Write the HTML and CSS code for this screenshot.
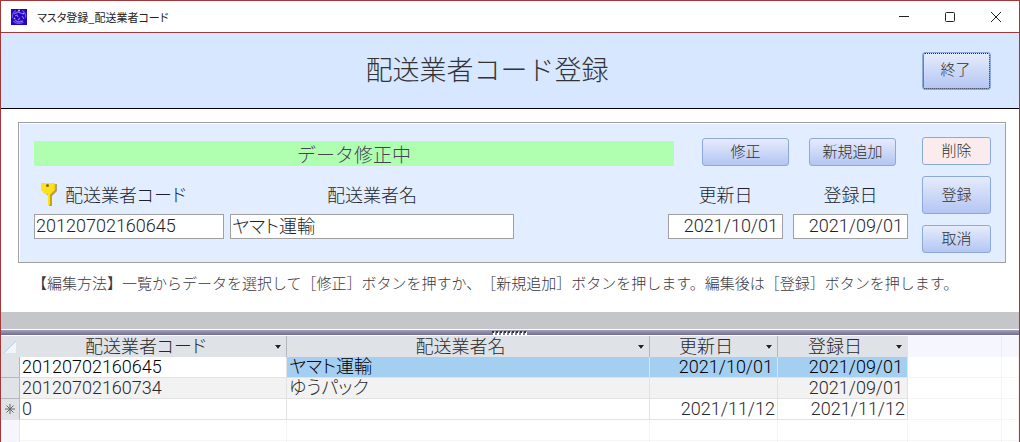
FILE: index.html
```
<!DOCTYPE html>
<html lang="ja">
<head>
<meta charset="utf-8">
<title>マスタ登録_配送業者コード</title>
<link rel="stylesheet" href="styles.css">
</head>
<body>
<div class="window">
  <header class="titlebar">
    <svg class="app-icon" viewBox="0 0 16 16" aria-hidden="true">
      <rect width="16" height="16" fill="#2a00c8"/>
      <g fill="none" stroke="#6458d4" stroke-width="1.3">
        <path d="M5 1.500C2 3 1 5 1.500 9M11 1.500c3 1.500 4 4 3.500 7M2.500 12c2 2.500 6 3.500 10 1"/>
        <path d="M3 5l4-2 5 2M4 11l3 2 5-1M11 7l2 3M4 7l2-1 1 2M9 9l-2 2" stroke="#7c72e2"/>
        <path d="M7 1.500h2M3 9l1 1M12 4l1 1" stroke="#b9b2f5"/>
      </g>
    </svg>
    <span class="caption">マスタ登録_配送業者コード</span>
    <div class="window-buttons">
      <button type="button" aria-label="最小化"><svg viewBox="0 0 12 12"><path d="M1 5.500h10"/></svg></button>
      <button type="button" aria-label="最大化"><svg viewBox="0 0 12 12"><rect x="1.500" y="1.500" width="9" height="9" rx="1"/></svg></button>
      <button type="button" aria-label="閉じる"><svg viewBox="0 0 12 12"><path d="M1 1l10 10M11 1L1 11"/></svg></button>
    </div>
  </header>

  <div class="form-header">
    <h1>配送業者コード登録</h1>
    <button type="button" class="btn btn-exit">終了</button>
  </div>

  <main class="form-body">
    <form class="panel">
      <div class="panel-main">
        <div class="status-row">
          <div class="status">データ修正中</div>
          <button type="button" class="btn btn-wide">修正</button>
          <button type="button" class="btn btn-wide">新規追加</button>
        </div>
        <div class="fields">
          <div class="field field-code">
            <label for="code">
              <svg class="key" viewBox="0 0 18 25" aria-hidden="true">
                <path d="M3 2h14v7l-5 5v10h-3V14L3 10z" fill="#a8a07a"/>
                <path d="M1 1h14v7l-4 4v11H8V12H5L1 8z" fill="#ffe01c"/>
                <path d="M10.500 12v11" stroke="#c8a400"/>
                <path d="M15 2v6l-4 4" fill="none" stroke="#d9b400"/>
                <circle cx="7.500" cy="3.500" r="1.500" fill="#716a35"/>
              </svg>配送業者コード</label>
            <input id="code" type="text" value="20120702160645">
          </div>
          <div class="field field-name">
            <label for="name">配送業者名</label>
            <input id="name" type="text" value="ヤマト運輸">
          </div>
          <div class="field field-date">
            <label for="updated">更新日</label>
            <input id="updated" type="text" value="2021/10/01">
          </div>
          <div class="field field-date">
            <label for="created">登録日</label>
            <input id="created" type="text" value="2021/09/01">
          </div>
        </div>
      </div>
      <div class="panel-side">
        <button type="button" class="btn btn-delete">削除</button>
        <button type="button" class="btn btn-save">登録</button>
        <button type="button" class="btn">取消</button>
      </div>
    </form>
    <p class="help">【編集方法】一覧からデータを選択して［修正］ボタンを押すか、［新規追加］ボタンを押します。編集後は［登録］ボタンを押します。</p>
  </main>

  <div class="spacer"></div>
  <div class="splitter"><svg class="grip" viewBox="0 0 36 4" aria-hidden="true"><path d="M1 2.500h35" stroke="#fff" stroke-width="3" stroke-dasharray="2 2"/><path d="M0 1h36" stroke="#33304a" stroke-width="2" stroke-dasharray="2 2"/></svg></div>

  <div class="sheet-area">
    <table class="sheet">
      <colgroup><col class="c-sel"><col class="c-code"><col class="c-name"><col class="c-upd"><col class="c-new"><col class="c-blank"><col></colgroup>
      <thead>
        <tr>
          <td class="corner"><svg viewBox="0 0 12 12" aria-hidden="true"><path d="M12 0v12H0z" fill="#eef5fb"/><path d="M12 0L0 12" stroke="#b4d0e8"/></svg></td>
          <th><div class="head"><span>配送業者コード</span><button type="button" aria-label="配送業者コードの並べ替え"></button></div></th>
          <th><div class="head"><span>配送業者名</span><button type="button" aria-label="配送業者名の並べ替え"></button></div></th>
          <th><div class="head"><span>更新日</span><button type="button" aria-label="更新日の並べ替え"></button></div></th>
          <th class="last"><div class="head"><span>登録日</span><button type="button" aria-label="登録日の並べ替え"></button></div></th>
          <td class="void"></td><td class="void"></td>
        </tr>
      </thead>
      <tbody>
        <tr class="selected"><td class="sel"></td><td class="current">20120702160645</td><td>ヤマト運輸</td><td class="date">2021/10/01</td><td class="date">2021/09/01</td><td class="void"></td><td class="void"></td></tr>
        <tr class="alt"><td class="sel"></td><td>20120702160734</td><td>ゆうパック</td><td class="date"></td><td class="date">2021/09/01</td><td class="void"></td><td class="void"></td></tr>
        <tr class="new"><td class="sel"><svg viewBox="0 0 10 10" aria-label="新規"><path d="M5 0v10M0 5h10M1.500 1.500l7 7M8.500 1.500l-7 7"/></svg></td><td>0</td><td></td><td class="date">2021/11/12</td><td class="date">2021/11/12</td><td class="void"></td><td class="void"></td></tr>
        <tr class="empty"><td class="sel"></td><td></td><td></td><td></td><td></td><td class="void"></td><td class="void"></td></tr>
        <tr class="empty"><td class="sel"></td><td></td><td></td><td></td><td></td><td class="void"></td><td class="void"></td></tr>
      </tbody>
    </table>
  </div>
</div>
</body>
</html>
```
FILE: styles.css
```
* { box-sizing: border-box; }

body {
  margin: 0;
  background: #fff;
  color: #1e1e2c;
  font: 300 18px/20px "Noto Sans CJK JP", sans-serif;
}

button, input { font: inherit; color: inherit; }
svg { display: block; }

.window {
  display: flex;
  flex-direction: column;
  height: 100vh;
  border: 1px solid #a4373a;
  border-bottom: 0;
  overflow: hidden;
}

/* title bar */
.titlebar {
  display: flex;
  align-items: center;
  flex: none;
  height: 32px;
  padding-left: 10px;
  border-bottom: 1px solid #a4373a;
}
.app-icon { width: 16px; height: 16px; }
.caption {
  margin-left: 10px;
  font-size: 11px;
  font-weight: 400;
  font-feature-settings: "palt";
  color: #222;
}
.window-buttons { display: flex; margin-left: auto; }
.window-buttons button {
  display: grid;
  place-items: center;
  width: 46px;
  height: 30px;
  padding: 0;
  border: 0;
  background: none;
}
.window-buttons svg {
  width: 12px;
  height: 12px;
  fill: none;
  stroke: #222;
}

/* form header */
.form-header {
  display: grid;
  grid-template-columns: 1fr auto 1fr;
  align-items: center;
  flex: none;
  height: 76px;
  padding: 0 28px;
  background: #d6e7ff;
  border-bottom: 1px solid #000;
}
h1 {
  grid-column: 2;
  margin: 0;
  padding: 0 46px 4px 0;
  font-size: 27px;
  font-weight: 300;
  line-height: 40px;
  color: #333;
}
.btn {
  height: 28px;
  padding: 0 0 2px;
  border: 1px solid #8da9dc;
  border-radius: 3px;
  background: linear-gradient(#e6ecfb, #b3c5f3);
  font-size: 15px;
  line-height: 20px;
  color: #303030;
}
.btn-exit {
  justify-self: end;
  width: 69px;
  height: 38px;
  padding: 0 2px 4px 0;
  outline: 1px dotted #222;
  outline-offset: -2px;
}

/* edit panel */
.form-body { flex: none; padding: 13px 13px 19px 17px; }
.panel {
  display: flex;
  gap: 14px;
  padding: 14px 14px 9px 14px;
  border: 1px solid #a0a0a0;
  box-shadow: inset 1px 1px #fff;
  background: #e2eeff;
}
.panel-main { flex: 1; min-width: 0; padding-left: 1px; }
.status-row { display: flex; align-items: center; padding-right: 12px; }
.status {
  flex: 1;
  height: 25px;
  margin: 4px 8px 0 0;
  background: #b0ffb0;
  font-size: 19px;
  line-height: 25px;
  text-align: center;
  color: #444455;
}
.btn-wide { width: 87px; margin-left: 20px; }
.fields { display: flex; margin-top: 18px; }
.field { display: flex; flex-direction: column; gap: 10px; }
.field label {
  display: flex;
  align-items: center;
  justify-content: center;
  height: 20px;
}
.field input {
  width: 100%;
  height: 25px;
  padding: 0 1px 3px;
  border: 1px solid #a0a0a0;
  border-radius: 0;
  background: #fff;
  font-family: Roboto, "Noto Sans CJK JP", sans-serif;
}
.field-code { width: 190px; margin-right: 6px; }
.field-code label {
  justify-content: flex-start;
  padding-left: 6px;
  font-feature-settings: "palt";
}
.field-name input { font-feature-settings: "palt"; }
.key { flex: none; width: 18px; height: 25px; margin-right: 7px; }
.field-name { width: 284px; margin-right: auto; }
.field-date { width: 115px; }
.field-date + .field-date { margin-left: 10px; }
.field-date input { padding-right: 4px; text-align: right; }

.panel-side {
  display: flex;
  flex-direction: column;
  gap: 11px;
  width: 69px;
}
.btn-delete { background: #faecec; }
.btn-save { height: 38px; }

.help {
  margin: 10px 0 0 14px;
  font-size: 15px;
  white-space: nowrap;
  text-spacing-trim: space-all;
  font-feature-settings: "chws" 0;
  color: #383840;
}

/* divider between form and list */
.spacer { flex: none; height: 17px; background: #c5c6ca; }
.splitter {
  flex: none;
  height: 7px;
  border: solid #fff;
  border-width: 1px 0;
  background: linear-gradient(#a5a1bd, #706c94);
}
.grip { width: 36px; height: 4px; margin: 1px auto 0; }

/* datasheet */
.sheet-area { flex: 1; min-height: 0; }
.sheet {
  width: 100%;
  table-layout: fixed;
  border-collapse: separate;
  border-spacing: 0;
}
.c-sel { width: 19px; }
.c-code { width: 267px; }
.c-name { width: 363px; }
.c-upd { width: 128px; }
.c-new { width: 130px; }
.c-blank { width: 94px; }
.sheet th, .sheet td {
  height: 21px;
  padding: 0 2px;
  border-right: 1px solid #e2e2e2;
  border-bottom: 1px solid #e2e2e2;
  line-height: 20px;
  white-space: nowrap;
  color: #282828;
  font-feature-settings: "palt";
}
.sheet tbody td { font-family: Roboto, "Noto Sans CJK JP", sans-serif; }
.sheet thead th, .sheet thead td {
  padding: 0;
  border-bottom: 0;
  border-right-color: #b4b7bd;
  background: #dfe2e6;
  font-weight: 300;
}
.sheet thead .corner, .sheet thead .last { border-right-color: #dfe2e6; }
.corner svg { width: 12px; height: 12px; margin-left: 3px; }
.head { display: flex; align-items: center; height: 21px; }
.head span {
  flex: 1;
  padding: 0 4px 3px 0;
  line-height: 18px;
  text-align: center;
}
.head button {
  width: 0;
  margin-right: 5px;
  padding: 0;
  border: solid transparent;
  border-width: 4px 3px 0;
  border-top-color: #222;
  background: none;
  filter: drop-shadow(0 1px #fff);
}
.sheet .sel {
  padding: 0;
  background: #dfe2e6;
  border-right-color: #b4b7bd;
  border-bottom-color: #b4b7bd;
}
.sel svg { width: 10px; height: 10px; margin: 0 auto; stroke: #666; }
.sheet .date { text-align: right; }
.selected .date, .alt .date { padding-right: 4px; }
.sheet .selected td { color: #000; }
.sheet .selected td:not(.sel, .void) { background: #a5cff1; }
.sheet .selected td.current { background: #fff; }
.sheet .alt td:not(.sel, .void) { background: #f2f2f2; }
.sheet .new .sel { border-bottom-color: #e2e2e2; }
.sheet td.void, .sheet .empty td { border-color: #f5f5f7; }
.sheet thead td.void { background: #f5f6fe; border-color: #ececf4; }
.sheet .empty .sel { background: #f5f6fe; border-right-color: #e6e6ee; }
```
